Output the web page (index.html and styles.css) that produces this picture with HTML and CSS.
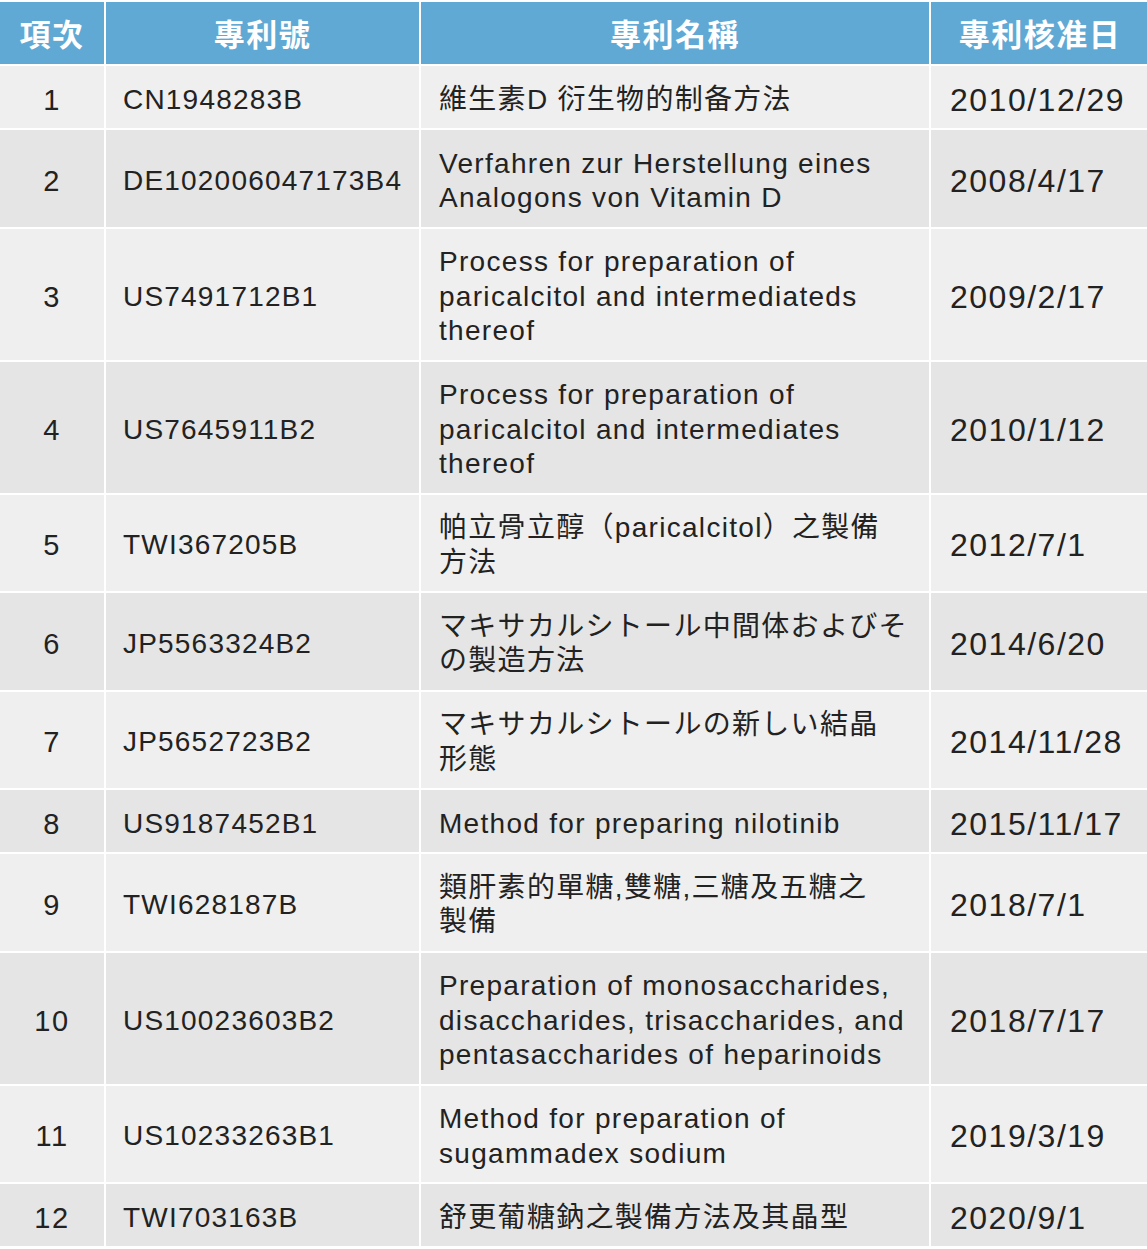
FILE: index.html
```html
<!DOCTYPE html>
<html lang="zh-Hant">
<head>
<meta charset="utf-8">
<title>專利列表</title>
<link rel="stylesheet" href="styles.css">
</head>
<body>
<div class="wrap">
<table class="patents">
  <colgroup>
    <col class="c1"><col class="c2"><col class="c3"><col class="c4">
  </colgroup>
  <thead>
    <tr><th>項次</th><th>專利號</th><th>專利名稱</th><th>專利核准日</th></tr>
  </thead>
  <tbody>
    <tr><td class="num">1</td><td>CN1948283B</td><td class="name">維生素D 衍生物的制备方法</td><td class="date">2010/12/29</td></tr>
    <tr><td class="num">2</td><td>DE102006047173B4</td><td class="name">Verfahren zur Herstellung eines<br>Analogons von Vitamin D</td><td class="date">2008/4/17</td></tr>
    <tr><td class="num">3</td><td>US7491712B1</td><td class="name">Process for preparation of<br>paricalcitol and intermediateds<br>thereof</td><td class="date">2009/2/17</td></tr>
    <tr><td class="num">4</td><td>US7645911B2</td><td class="name">Process for preparation of<br>paricalcitol and intermediates<br>thereof</td><td class="date">2010/1/12</td></tr>
    <tr><td class="num">5</td><td>TWI367205B</td><td class="name">帕立骨立醇（paricalcitol）之製備<br>方法</td><td class="date">2012/7/1</td></tr>
    <tr><td class="num">6</td><td>JP5563324B2</td><td class="name" lang="ja">マキサカルシトール中間体およびそ<br>の製造方法</td><td class="date">2014/6/20</td></tr>
    <tr><td class="num">7</td><td>JP5652723B2</td><td class="name" lang="ja">マキサカルシトールの新しい結晶<br>形態</td><td class="date">2014/11/28</td></tr>
    <tr><td class="num">8</td><td>US9187452B1</td><td class="name">Method for preparing nilotinib</td><td class="date">2015/11/17</td></tr>
    <tr><td class="num">9</td><td>TWI628187B</td><td class="name">類肝素的單糖,雙糖,三糖及五糖之<br>製備</td><td class="date">2018/7/1</td></tr>
    <tr><td class="num">10</td><td>US10023603B2</td><td class="name">Preparation of monosaccharides,<br>disaccharides, trisaccharides, and<br>pentasaccharides of heparinoids</td><td class="date">2018/7/17</td></tr>
    <tr><td class="num">11</td><td>US10233263B1</td><td class="name">Method for preparation of<br>sugammadex sodium</td><td class="date">2019/3/19</td></tr>
    <tr><td class="num">12</td><td>TWI703163B</td><td class="name">舒更葡糖鈉之製備方法及其晶型</td><td class="date">2020/9/1</td></tr>
  </tbody>
</table>
</div>
</body>
</html>
```

FILE: styles.css
```css
html, body {
  margin: 0;
  padding: 0;
  background: #ffffff;
}
.wrap {
  width: 1147px;
  overflow: hidden;
}
.patents {
  table-layout: fixed;
  border-collapse: separate;
  border-spacing: 2px;
  margin-left: -2px;
  width: 1153px;
  font-family: "Liberation Sans", "Noto Sans CJK TC", sans-serif;
  color: #222222;
}
.patents [lang="ja"] {
  font-family: "Liberation Sans", "Noto Sans CJK JP", sans-serif;
}
.c1 { width: 104px; }
.c2 { width: 313px; }
.c3 { width: 508px; }
.c4 { width: 218px; }

.patents th {
  background: #5fa9d4;
  color: #ffffff;
  font-size: 31px;
  font-weight: 700;
  letter-spacing: 1.5px;
  line-height: 34px;
  height: 62px;
  box-sizing: border-box;
  padding: 17px 0 11px;
  text-align: center;
  white-space: nowrap;
}
.patents td {
  font-size: 28px;
  letter-spacing: 1.2px;
  line-height: 34.5px;
  padding: 16.5px 6px 11px 17px;
  vertical-align: middle;
  text-align: left;
  white-space: nowrap;
}
.patents td.name {
  padding-left: 18px;
  letter-spacing: 1.3px;
}
.patents td.date {
  padding-left: 19px;
  font-size: 32px;
  letter-spacing: 1.5px;
}
.patents td.num {
  text-align: center;
  padding-left: 0;
  padding-right: 0;
  font-size: 29px;
  letter-spacing: 1.5px;
}
.patents tbody tr:nth-child(odd) td {
  background: #efefef;
}
.patents tbody tr:nth-child(even) td {
  background: #e5e5e5;
}
```
